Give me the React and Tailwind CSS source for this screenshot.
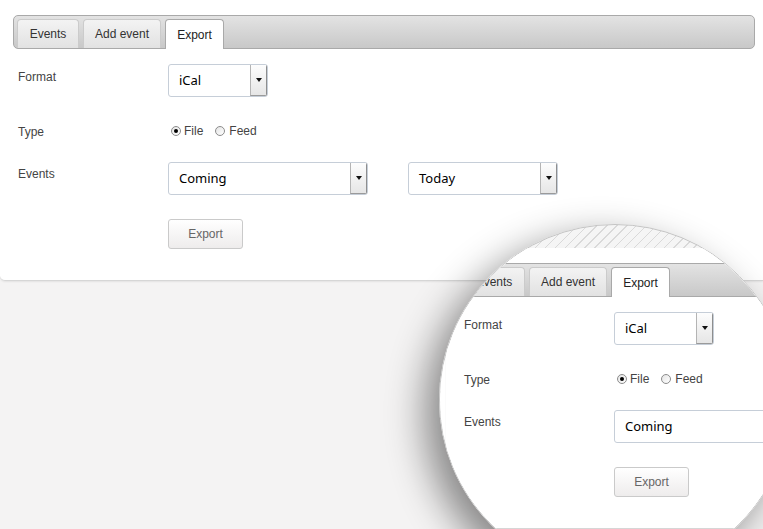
import React from "react";

const SANS = { fontFamily: '"Liberation Sans", Arial, sans-serif' };

function Select({ w, text }) {
  return (
    <div className={`${w} h-[33px] flex border border-[#c6ced8] rounded-[3px] bg-white overflow-hidden shrink-0`}>
      <span className="flex-1 flex items-center pl-[10px] text-[13px] text-black font-['Noto_Sans',sans-serif]">{text}</span>
      <span className="w-[17px] flex items-center justify-center border-l border-[#b4b4b4] border-r border-r-[#8e8e8e] border-b border-b-[#9a9a9a] bg-gradient-to-b from-[#fdfdfd] to-[#e6e6e6]">
        <span className="w-0 h-0 border-l-[3.5px] border-r-[3.5px] border-t-[4px] border-l-transparent border-r-transparent border-t-[#111]" />
      </span>
    </div>
  );
}

function Radio({ checked }) {
  return (
    <span className="w-[10px] h-[10px] rounded-full border border-[#8c8c8c] bg-gradient-to-br from-[#e4e4e4] to-white flex items-center justify-center shrink-0">
      {checked && <span className="w-[4px] h-[4px] rounded-full bg-black" />}
    </span>
  );
}

function Tab({ w, label, active }) {
  return active ? (
    <div className={`${w} h-[30px] -mb-px rounded-t-[4px] border border-b-0 border-[#a9a9a9] bg-white flex items-center justify-center text-[12px] text-[#222]`}>
      {label}
    </div>
  ) : (
    <div className={`${w} h-[29px] rounded-t-[4px] border border-b-0 border-[#cbcbcb] bg-gradient-to-b from-[#f3f3f3] to-[#e2e2e2] flex items-center justify-center text-[12px] text-[#333]`}>
      {label}
    </div>
  );
}

function Panel() {
  return (
    <div style={SANS} className="w-[763px] h-[281px] box-border bg-white border-b border-[#d6d6d6] rounded-bl-[5px] shadow-[0_1px_2px_rgba(0,0,0,0.07)] pt-[15px] pl-[13px] pr-[8px] flex flex-col">
      <div className="h-[34px] box-border rounded-[5px] border border-[#a9a9a9] bg-gradient-to-b from-[#e3e3e3] to-[#c8c8c8] flex items-end gap-[4px] pl-[3px]">
        <Tab w="w-[62px]" label="Events" />
        <Tab w="w-[78px]" label="Add event" />
        <Tab w="w-[59px]" label="Export" active />
      </div>
      <div className="pl-[5px] flex flex-col text-[12px] text-[#444]">
        <div className="mt-[15px] h-[33px] flex">
          <div className="w-[150px] pt-[5px] leading-[16px]">Format</div>
          <Select w="w-[100px]" text="iCal" />
        </div>
        <div className="mt-[26px] h-[16px] flex items-center">
          <div className="w-[150px] leading-[16px] pt-[2px]">Type</div>
          <div className="flex items-center pl-[3px]">
            <Radio checked />
            <span className="ml-[3px] leading-[16px]">File</span>
            <span className="ml-[12px]"><Radio /></span>
            <span className="ml-[4px] leading-[16px]">Feed</span>
          </div>
        </div>
        <div className="mt-[23px] h-[33px] flex">
          <div className="w-[150px] pt-[4px] leading-[16px]">Events</div>
          <Select w="w-[200px]" text="Coming" />
          <div className="ml-[40px]">
            <Select w="w-[150px]" text="Today" />
          </div>
        </div>
        <div className="mt-[24px] flex">
          <div className="w-[150px]" />
          <button className="w-[75px] h-[30px] box-border border border-[#cacaca] rounded-[3px] bg-gradient-to-b from-white to-[#eeecec] text-[12px] text-[#666]">
            Export
          </button>
        </div>
      </div>
    </div>
  );
}

export default function App() {
  return (
    <div className="relative w-[763px] h-[529px] overflow-hidden bg-[#f4f3f3]">
      <Panel />
      <div className="absolute left-[439px] top-[224px] w-[352px] h-[352px] rounded-full overflow-hidden border border-[#c4c4c4] shadow-[-14px_14px_38px_rgba(0,0,0,0.45)] bg-[repeating-linear-gradient(135deg,#f5f5f5_0px,#f5f5f5_6px,#d9d9d9_6px,#d9d9d9_7px)]">
        <div className="absolute left-0 right-0 top-[23px] bottom-0 bg-white pl-[6px]">
          <Panel />
        </div>
      </div>
    </div>
  );
}
